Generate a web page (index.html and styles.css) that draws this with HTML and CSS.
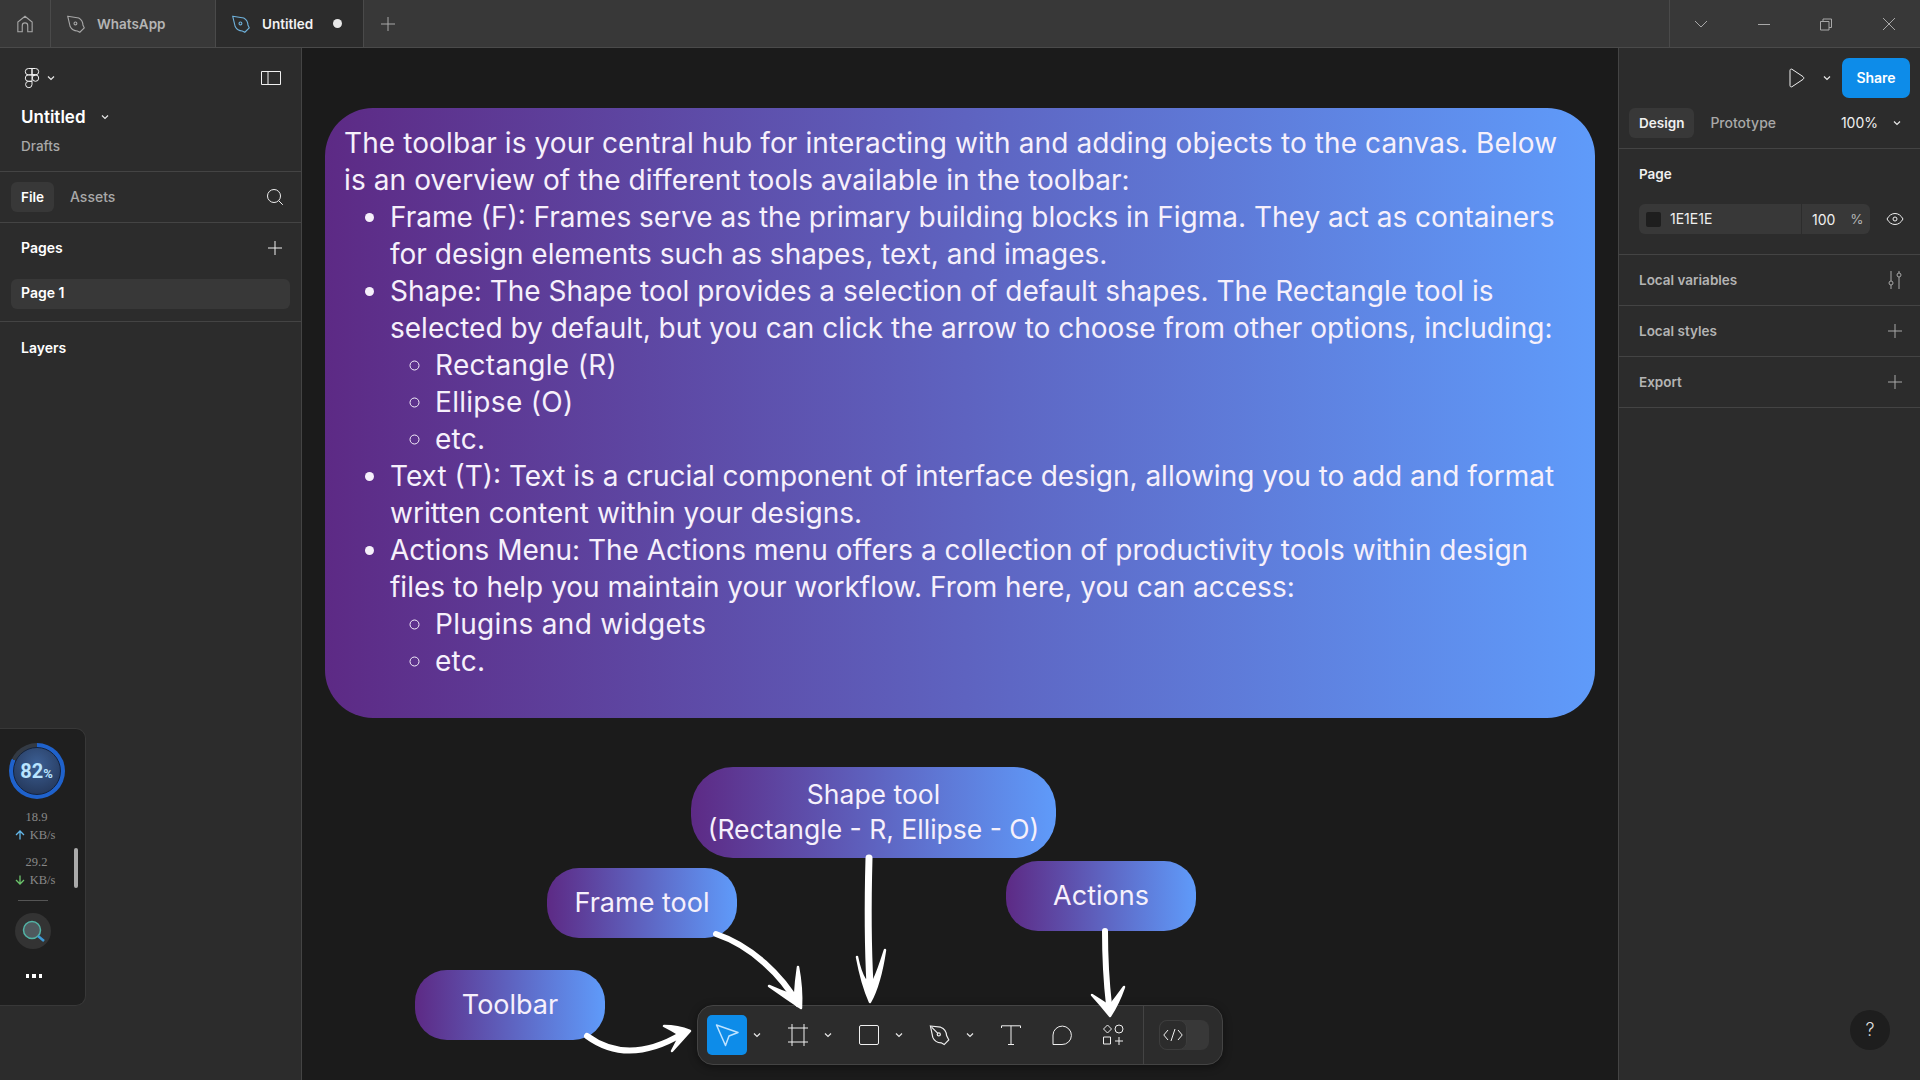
FILE: index.html
```html
<!DOCTYPE html>
<html lang="en">
  <head>
    <meta charset="UTF-8" />
    <title>Untitled - Figma</title>
    <link rel="stylesheet" href="styles.css">
  </head>
  <body>
    <header class="tabbar">
      <div class="tab tab-home">
        <svg class="icon" width="22" height="22" viewBox="0 0 20 20"><path d="M3.5 17V8.2L10 3l6.5 5.2V17h-4v-5.500a2.500 2.500 0 0 0-5 0V17z"/></svg>
      </div>
      <div class="tab tab-file">
        <svg class="icon" width="22" height="22" viewBox="0 0 20 20"><path d="M2.500 3l10 1.500c2.500 1.500 3.800 4 3.800 6.500l1.200 2.500-4 4-2.300-1.200c-2.800 0-5.300-1.500-6.500-4z"/><circle cx="9.500" cy="9.500" r="1.300"/></svg>
        <span>WhatsApp</span>
      </div>
      <div class="tab tab-file tab-active">
        <svg class="icon icon-blue" width="22" height="22" viewBox="0 0 20 20"><path d="M2.500 3l10 1.500c2.500 1.500 3.800 4 3.800 6.500l1.200 2.500-4 4-2.300-1.200c-2.800 0-5.300-1.500-6.500-4z"/><circle cx="9.500" cy="9.500" r="1.300"/></svg>
        <span>Untitled</span>
        <i class="dot"></i>
      </div>
      <div class="tab-add">
        <svg class="icon" width="16" height="16" viewBox="0 0 16 16"><path d="M8 1v14M1 8h14"/></svg>
      </div>
      <div class="win-controls">
        <svg class="icon" width="16" height="16" viewBox="0 0 16 16"><path d="M2 5l6 6 6-6"/></svg>
        <svg class="icon" width="16" height="16" viewBox="0 0 16 16"><path d="M2 8.500h12"/></svg>
        <svg class="icon" width="16" height="16" viewBox="0 0 16 16"><path d="M2.500 5.500h8.500v8.500H2.500zM5 5.500V3h8.500v8.500H11"/></svg>
        <svg class="icon" width="16" height="16" viewBox="0 0 16 16"><path d="M2 2l12 12M14 2L2 14"/></svg>
      </div>
    </header>

    <div class="main">
      <aside class="sidebar">
        <section class="side-head">
          <div class="logo-row">
            <div class="logo-wrap">
              <svg class="icon icon-bright" width="16" height="22" viewBox="0 0 16 22"><path d="M8 1.500H4.500a3.200 3.200 0 0 0 0 6.400H8zM8 1.500h3.500a3.200 3.200 0 0 1 0 6.400H8zM8 7.900H4.500a3.200 3.200 0 0 0 0 6.400H8zM8 7.900h3.500a3.200 3.200 0 0 1 0 6.400 3.200 3.200 0 0 1 0-6.400zM8 14.300H4.500A3.200 3.200 0 1 0 8 17.500z"/></svg>
              <svg class="chev" width="8" height="6" viewBox="0 0 8 6"><path d="M1 1.500l3 3 3-3"/></svg>
            </div>
            <svg class="icon icon-bright" width="20" height="16" viewBox="0 0 20 16"><path d="M.5 1.500h19v13H.5zM7 1.500v13"/></svg>
          </div>
          <div class="file-title">Untitled <svg class="chev" width="8" height="6" viewBox="0 0 8 6"><path d="M1 1.500l3 3 3-3"/></svg></div>
          <div class="file-sub">Drafts</div>
        </section>
        <section class="side-tabs">
          <span class="pill-tab">File</span>
          <span class="tab-muted">Assets</span>
          <svg class="icon icon-bright search" width="18" height="18" viewBox="0 0 18 18"><circle cx="8" cy="8" r="6.500"/><path d="M12.800 12.800l4 4"/></svg>
        </section>
        <section class="side-pages">
          <div class="side-row">
            <strong>Pages</strong>
            <svg class="icon icon-bright" width="14" height="14" viewBox="0 0 14 14"><path d="M7 0v14M0 7h14"/></svg>
          </div>
          <div class="page-item">Page 1</div>
        </section>
        <section class="side-layers"><strong>Layers</strong></section>
      </aside>

      <main class="canvas">
        <div class="grad card">
          The toolbar is your central hub for interacting with and adding objects to the canvas. Below<br>
          is an overview of the different tools available in the toolbar:
          <ul>
            <li>Frame (F): Frames serve as the primary building blocks in Figma. They act as containers<br>for design elements such as shapes, text, and images.</li>
            <li>Shape: The Shape tool provides a selection of default shapes. The Rectangle tool is<br>selected by default, but you can click the arrow to choose from other options, including:
              <ul>
                <li>Rectangle (R)</li>
                <li>Ellipse (O)</li>
                <li>etc.</li>
              </ul>
            </li>
            <li>Text (T): Text is a crucial component of interface design, allowing you to add and format<br>written content within your designs.</li>
            <li>Actions Menu: The Actions menu offers a collection of productivity tools within design<br>files to help you maintain your workflow. From here, you can access:
              <ul>
                <li>Plugins and widgets</li>
                <li>etc.</li>
              </ul>
            </li>
          </ul>
        </div>

        <div class="grad pill pill-shape">Shape tool<br>(Rectangle - R, Ellipse - O)</div>
        <div class="grad pill pill-frame">Frame tool</div>
        <div class="grad pill pill-actions">Actions</div>
        <div class="grad pill pill-toolbar">Toolbar</div>

        <div class="toolbar">
          <div class="tool tool-active">
            <svg width="26" height="26" viewBox="0 0 26 26" fill="none" stroke="#bfe3ff" stroke-width="1.500" stroke-linejoin="round"><path d="M2.500 3L24 10.500l-9 3.500-3.500 9.500z"/></svg>
          </div>
          <svg class="chev chev-tool" width="8" height="6" viewBox="0 0 8 6"><path d="M1 1.500l3 3 3-3"/></svg>
          <div class="tool">
            <svg class="icon icon-bright" width="20" height="22" viewBox="0 0 20 22"><path d="M4 0v22M16 0v22M0 4h20M0 18h20"/></svg>
          </div>
          <svg class="chev chev-tool" width="8" height="6" viewBox="0 0 8 6"><path d="M1 1.500l3 3 3-3"/></svg>
          <div class="tool">
            <svg class="icon icon-bright" width="20" height="20" viewBox="0 0 20 20"><rect x=".5" y=".5" width="19" height="19" rx="1.500"/></svg>
          </div>
          <svg class="chev chev-tool" width="8" height="6" viewBox="0 0 8 6"><path d="M1 1.500l3 3 3-3"/></svg>
          <div class="tool">
            <svg class="icon icon-bright" width="24" height="24" viewBox="0 0 20 20"><path d="M2 2.500l8.500 1c2.800 1 4.800 4 5 7l1.800 3.500-3.800 4-2.500-1.500c-3 0-5.800-1.500-7-4.500z"/><circle cx="9" cy="9.500" r="1.300"/><path d="M3 3.500l5 5"/></svg>
          </div>
          <svg class="chev chev-tool" width="8" height="6" viewBox="0 0 8 6"><path d="M1 1.500l3 3 3-3"/></svg>
          <div class="tool">
            <svg class="icon icon-bright" width="20" height="20" viewBox="0 0 20 20"><path d="M.5 3V.8h19V3M10 .8v18.700M7 19.500h6"/></svg>
          </div>
          <div class="tool">
            <svg class="icon icon-bright" width="20" height="20" viewBox="0 0 20 20"><path d="M1 19.500V10a9.200 9.200 0 1 1 9 9.500z"/></svg>
          </div>
          <div class="tool">
            <svg class="icon icon-bright" width="22" height="22" viewBox="0 0 22 22"><path d="M5.500 1l4 4-4 4-4-4zM1.500 13h7v7h-7zM17 13v8M13 17h8"/><circle cx="17" cy="5" r="4"/></svg>
          </div>
          <div class="tool-sep"></div>
          <div class="dev-toggle">
            <div class="dev-knob">
              <svg class="icon icon-bright" width="20" height="14" viewBox="0 0 20 14"><path d="M5 2L.8 7 5 12M15 2l4.200 5-4.200 5M12 1L8 13"/></svg>
            </div>
          </div>
        </div>

        <svg class="arrows" width="1316" height="1032" viewBox="302 48 1316 1032">
          <path class="arrow-line" d="M587 1036Q628 1066 682 1034"/>
          <path class="arrow-fill" d="M664 1026Q678 1026 690 1031Q682 1040 672 1051Q678 1040 680 1035Q672 1030 664 1026Z"/>
          <path class="arrow-line" d="M716 934C752 946 782 976 798 1004"/>
          <path class="arrow-fill" d="M769 986Q786 998 801 1008Q802 988 798 967Q796 980 795 996Q782 992 769 986Z"/>
          <path class="arrow-line arrow-thick" d="M869 858Q867 930 870 985"/>
          <path class="arrow-fill" d="M857 957Q862 984 870 1002Q880 984 885 950Q878 972 874 980L865 980Q860 972 857 957Z"/>
          <path class="arrow-line" d="M1105 931Q1105 970 1109 1005"/>
          <path class="arrow-fill" d="M1092 995Q1102 1006 1110 1016Q1118 1004 1124 987Q1116 998 1112 1003L1106 1004Q1100 1000 1092 995Z"/>
        </svg>
      </main>

      <aside class="props">
        <div class="props-top">
          <svg class="icon icon-bright" width="16" height="20" viewBox="0 0 16 20"><path d="M1 2.500c0-1.200 1-1.800 2-1.200l11 7.300c1 .7 1 2.100 0 2.800L3 18.700c-1 .6-2 0-2-1.200z"/></svg>
          <svg class="chev play-chev" width="8" height="6" viewBox="0 0 8 6"><path d="M1 1.500l3 3 3-3"/></svg>
          <button class="share">Share</button>
        </div>
        <div class="props-tabs">
          <span class="pill-tab pill-design">Design</span>
          <span class="tab-muted">Prototype</span>
          <span class="zoom-val">100%</span>
          <svg class="chev" width="8" height="6" viewBox="0 0 8 6"><path d="M1 1.500l3 3 3-3"/></svg>
        </div>
        <section class="props-page">
          <strong>Page</strong>
          <div class="fill-row">
            <div class="fill-input">
              <i class="swatch"></i>
              <span class="fill-hex">1E1E1E</span>
              <span class="fill-num">100</span>
              <span class="fill-pct">%</span>
            </div>
            <svg class="icon icon-bright" width="18" height="14" viewBox="0 0 18 14"><path d="M1 7c2-3.700 4.800-5.500 8-5.500S15 3.300 17 7c-2 3.700-4.800 5.500-8 5.500S3 10.700 1 7z"/><circle cx="9" cy="7" r="2"/></svg>
          </div>
        </section>
        <div class="props-row">
          <span>Local variables</span>
          <svg class="icon" width="16" height="20" viewBox="0 0 16 20"><path d="M4 1v10M4 15v4M12 1v2M12 7v12"/><circle cx="4" cy="13" r="2"/><circle cx="12" cy="5" r="2"/></svg>
        </div>
        <div class="props-row">
          <span>Local styles</span>
          <svg class="icon plus-icon" width="14" height="14" viewBox="0 0 14 14"><path d="M7 0v14M0 7h14"/></svg>
        </div>
        <div class="props-row">
          <span>Export</span>
          <svg class="icon plus-icon" width="14" height="14" viewBox="0 0 14 14"><path d="M7 0v14M0 7h14"/></svg>
        </div>
      </aside>
    </div>

    <div class="net-widget">
      <div class="gauge"><div class="gauge-in">82<small>%</small></div></div>
      <div class="speed">18.9</div>
      <div class="speed speed-unit"><svg width="10" height="10" viewBox="0 0 10 10" fill="none" stroke="#62b6e8" stroke-width="1.300"><path d="M5 9.500V1M1 5l4-4 4 4"/></svg>KB/s</div>
      <div class="speed speed-next">29.2</div>
      <div class="speed speed-unit"><svg width="10" height="10" viewBox="0 0 10 10" fill="none" stroke="#6cc46c" stroke-width="1.300"><path d="M5 .5V9M1 5l4 4 4-4"/></svg>KB/s</div>
      <div class="net-line"></div>
      <div class="net-search">
        <svg width="26" height="26" viewBox="0 0 26 26" fill="none"><circle cx="12" cy="12" r="8.500" fill="#4f5a5e" stroke="#52b3a5" stroke-width="1.500"/><path d="M18 18l6 5" stroke="#3d9ad6" stroke-width="2.500"/></svg>
      </div>
      <div class="net-dots"><i></i><i></i><i></i></div>
      <div class="net-scroll"></div>
    </div>

    <div class="help">?</div>
  </body>
</html>
```

FILE: styles.css
```css
* {
  box-sizing: border-box;
}
body {
  margin: 0;
  width: 1920px;
  height: 1080px;
  overflow: hidden;
  display: flex;
  flex-direction: column;
  background: #1b1b1b;
  color: #fff;
  font-family: Inter, "Liberation Sans", sans-serif;
  font-size: 13.5px;
  position: relative;
}
strong {
  font-weight: 600;
}
.icon {
  fill: none;
  stroke: #a8a8a8;
  stroke-width: 1;
  flex: none;
}
.icon-bright {
  stroke: #f0f0f0;
}
.icon-blue {
  stroke: #6fb2dc;
}
.chev {
  fill: none;
  stroke: #e8e8e8;
  stroke-width: 1.2;
  flex: none;
}

/* top tab strip */
.tabbar {
  height: 48px;
  flex: none;
  display: flex;
  align-items: stretch;
  background: #383838;
  border-bottom: 1px solid #4a4a4a;
}
.tab {
  display: flex;
  align-items: center;
  border-right: 1px solid #4a4a4a;
  color: #b4b4b4;
  font-weight: 600;
  font-size: 13.5px;
}
.tab-home {
  width: 51px;
  justify-content: center;
}
.tab-file {
  width: 165px;
  padding-left: 14px;
  gap: 10px;
}
.tab-active {
  width: 148px;
  padding-left: 14px;
  background: #2c2c2c;
  color: #f2f2f2;
}
.dot {
  width: 9px;
  height: 9px;
  border-radius: 50%;
  background: #e8e8e8;
  margin-left: 10px;
}
.tab-add {
  display: flex;
  align-items: center;
  margin-left: 16px;
}
.win-controls {
  margin-left: auto;
  width: 251px;
  border-left: 1px solid #4a4a4a;
  display: flex;
  align-items: center;
  justify-content: space-between;
  padding: 0 23px;
}

.main {
  flex: 1;
  display: flex;
  min-height: 0;
}

/* left panel */
.sidebar {
  width: 302px;
  flex: none;
  background: #2c2c2c;
  border-right: 1px solid #444;
  display: flex;
  flex-direction: column;
}
.sidebar section {
  border-bottom: 1px solid #444;
}
.side-head {
  height: 124px;
  padding: 19px 20px 0 21px;
}
.logo-row {
  display: flex;
  justify-content: space-between;
  align-items: center;
}
.logo-wrap {
  display: flex;
  align-items: center;
  gap: 7px;
  margin-left: 3px;
}
.file-title {
  margin-top: 18px;
  font-size: 17px;
  font-weight: 600;
  display: flex;
  align-items: center;
  gap: 15px;
}
.file-sub {
  margin-top: 11px;
  color: #a8a8a8;
  font-weight: 500;
}
.side-tabs {
  height: 51px;
  display: flex;
  align-items: center;
  padding: 0 17px 0 11px;
  font-weight: 600;
}
.pill-tab {
  background: #383838;
  border-radius: 6px;
  padding: 8px 10px;
  font-weight: 600;
  line-height: 14px;
}
.tab-muted {
  color: #a8a8a8;
  margin: 0 0 2px 16px;
  font-size: 14px;
  font-weight: 500;
}
.search {
  margin-left: auto;
}
.side-pages {
  height: 99px;
  padding: 0 11px;
}
.side-pages strong,
.side-layers strong,
.page-item {
  font-size: 14px;
}
.side-row {
  display: flex;
  justify-content: space-between;
  align-items: center;
  padding: 16px 8px 0 10px;
  margin-bottom: 23px;
}
.page-item {
  background: #383838;
  border-radius: 6px;
  height: 30px;
  line-height: 28px;
  padding-left: 10px;
  font-weight: 600;
}
.sidebar .side-layers {
  border-bottom: 0;
  padding: 17px 21px;
}

/* canvas */
.canvas {
  flex: 1;
  position: relative;
  background: #1b1b1b;
}
.grad {
  background: linear-gradient(90deg, #5d2a85 0%, #5f9bfa 100%);
  color: #f6f0fb;
  font-family: Inter, sans-serif;
}
.card {
  position: absolute;
  left: 23px;
  top: 60px;
  width: 1270px;
  height: 610px;
  border-radius: 48px;
  padding: 17px 19px;
  font-size: 28px;
  letter-spacing: 0.1px;
  line-height: 37px;
  white-space: nowrap;
}
.card ul {
  margin: 0;
  padding-left: 46px;
  letter-spacing: 0;
  list-style: disc;
}
.card ul ul {
  padding-left: 45px;
  letter-spacing: 0.3px;
  list-style: circle;
}
.pill {
  position: absolute;
  display: flex;
  align-items: center;
  justify-content: center;
  text-align: center;
  font-size: 27px;
  line-height: 35px;
  padding-bottom: 2px;
}
.pill-shape {
  left: 389px;
  top: 719px;
  width: 365px;
  height: 91px;
  border-radius: 42px;
  font-size: 26.5px;
}
.pill-frame {
  left: 245px;
  top: 820px;
  width: 190px;
  height: 70px;
  border-radius: 32px;
}
.pill-actions {
  left: 704px;
  top: 813px;
  width: 190px;
  height: 70px;
  border-radius: 32px;
}
.pill-toolbar {
  left: 113px;
  top: 922px;
  width: 190px;
  height: 70px;
  border-radius: 32px;
}

/* tools at the bottom of the canvas */
.toolbar {
  position: absolute;
  left: 395px;
  top: 957px;
  width: 526px;
  height: 60px;
  background: #2c2c2c;
  border: 1px solid #444;
  border-radius: 16px;
  display: flex;
  align-items: center;
  padding-left: 9px;
  box-shadow: 0 2px 8px rgba(0, 0, 0, 0.4);
}
.tool {
  width: 40px;
  height: 40px;
  display: flex;
  align-items: center;
  justify-content: center;
  flex: none;
  margin-left: 11px;
}
.tool-active {
  background: #0d8ce9;
  border-radius: 5px;
  margin-left: 0;
}
.chev-tool {
  margin: 0 6px;
}
.tool-sep {
  width: 1px;
  height: 58px;
  background: #444;
  margin-left: 10px;
}
.dev-toggle {
  width: 50px;
  height: 30px;
  margin-left: 15px;
  background: #383838;
  border-radius: 8px;
}
.dev-knob {
  width: 28px;
  height: 30px;
  background: #2c2c2c;
  border: 1px solid #3d3d3d;
  border-radius: 8px;
  display: flex;
  align-items: center;
  justify-content: center;
}
.arrows {
  position: absolute;
  left: 0;
  top: 0;
  pointer-events: none;
}
.arrow-line {
  fill: none;
  stroke: #fff;
  stroke-width: 6;
  stroke-linecap: round;
}
.arrow-thick {
  stroke-width: 7;
}
.arrow-fill {
  fill: #fff;
  stroke: #fff;
  stroke-width: 2.5;
  stroke-linejoin: round;
}

/* right panel */
.props {
  width: 302px;
  flex: none;
  background: #2c2c2c;
  border-left: 1px solid #444;
  color: #f0f0f0;
}
.props-top {
  height: 60px;
  display: flex;
  align-items: center;
  justify-content: flex-end;
  padding: 0 10px 0 0;
}
.play-chev {
  margin: 0 11px 0 18px;
}
.share {
  width: 68px;
  height: 40px;
  border: 0;
  border-radius: 7px;
  background: #0d8ce9;
  color: #fff;
  padding-bottom: 2px;
  font: 600 14px Inter, sans-serif;
}
.props-tabs {
  height: 41px;
  display: flex;
  align-items: center;
  padding: 0 19px 10px 10px;
  border-bottom: 1px solid #444;
}
.pill-design {
  padding: 8px 10px;
}
.zoom-val {
  margin: 0 15px 2px auto;
  font-size: 14px;
}
.props-page {
  height: 106px;
  padding: 17px 16px 0 20px;
  border-bottom: 1px solid #444;
}
.fill-row {
  display: flex;
  align-items: center;
  justify-content: space-between;
  margin-top: 22px;
}
.fill-input {
  width: 231px;
  height: 30px;
  background: #383838;
  border-radius: 6px;
  display: flex;
  align-items: center;
  padding-left: 7px;
}
.swatch {
  width: 15px;
  height: 15px;
  border-radius: 2px;
  background: #1e1e1e;
}
.fill-hex {
  margin-left: 9px;
  width: 132px;
  height: 100%;
  line-height: 30px;
  font-size: 14px;
  border-right: 1px solid #2c2c2c;
}
.fill-num {
  margin-left: 10px;
  font-size: 14px;
}
.fill-pct {
  margin-left: 15px;
  color: #b4b4b4;
}
.props-row {
  height: 51px;
  display: flex;
  align-items: center;
  justify-content: space-between;
  padding: 0 17px 0 20px;
  border-bottom: 1px solid #444;
  color: #b4b4b4;
  font-weight: 600;
}
.plus-icon {
  margin-right: 1px;
}

/* floating network meter */
.net-widget {
  position: absolute;
  left: 0;
  top: 728px;
  width: 86px;
  height: 278px;
  background: #1f1f1f;
  border: 1px solid #383838;
  border-left: 0;
  border-radius: 0 10px 10px 0;
  display: flex;
  flex-direction: column;
  align-items: center;
  padding: 14px 12px 0 0;
  font-family: "Liberation Serif", serif;
  color: #888;
}
.gauge {
  width: 56px;
  height: 56px;
  border-radius: 50%;
  background: conic-gradient(#1f62cc 0 82%, #333a44 82% 100%);
  display: flex;
  align-items: center;
  justify-content: center;
  flex: none;
  margin-bottom: 9px;
}
.gauge-in {
  width: 48px;
  height: 48px;
  border-radius: 50%;
  background: radial-gradient(circle at 50% 35%, #3c5f94, #20304f);
  border: 1px solid #14233d;
  color: #b9e4ff;
  font: 700 20px/46px Roboto, sans-serif;
  text-align: center;
}
.gauge-in small {
  font-size: 13px;
}
.speed {
  font-size: 12.5px;
  line-height: 18px;
}
.speed-unit {
  display: flex;
  align-items: center;
  gap: 5px;
  margin-left: -3px;
}
.speed-next {
  margin-top: 9px;
}
.net-line {
  width: 30px;
  height: 1px;
  background: #555;
  margin: 11px 7px 12px 0;
}
.net-search {
  width: 36px;
  height: 36px;
  border-radius: 50%;
  background: #333;
  display: flex;
  align-items: center;
  justify-content: center;
  margin-right: 7px;
}
.net-dots {
  display: flex;
  gap: 3px;
  margin: 25px 5px 0 0;
}
.net-dots i {
  width: 3.5px;
  height: 3.5px;
  background: #fff;
}
.net-scroll {
  position: absolute;
  left: 74px;
  top: 119px;
  width: 4px;
  height: 40px;
  background: #aaa;
  border-radius: 2px;
}

.help {
  position: absolute;
  left: 1850px;
  top: 1010px;
  width: 40px;
  height: 40px;
  border-radius: 50%;
  background: #1e1e1e;
  color: #ddd;
  font-size: 18px;
  font-weight: 300;
  line-height: 40px;
  text-align: center;
}
```
